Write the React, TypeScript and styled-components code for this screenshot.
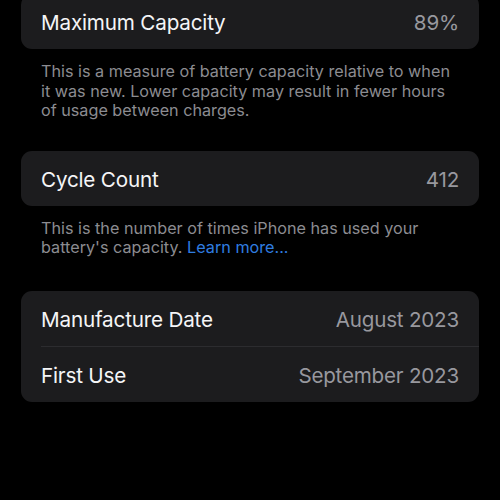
import React from 'react';
import styled, { createGlobalStyle } from 'styled-components';

const GlobalStyle = createGlobalStyle`
  html, body {
    margin: 0;
    padding: 0;
    background: #000;
  }
  body {
    font-family: Inter, "Noto Sans", "Liberation Sans", sans-serif;
    -webkit-font-smoothing: antialiased;
  }
`;

type RowType = {
  label: string;
  value: string;
};

const dates: RowType[] = [
  { label: 'Manufacture Date', value: 'August 2023' },
  { label: 'First Use', value: 'September 2023' },
];

const Battery = () => {
  return (
    <Main>
      <GlobalStyle />
      <Group $first>
        <Row>
          <Label>Maximum Capacity</Label>
          <Value>89%</Value>
        </Row>
      </Group>
      <Caption>
        This is a measure of battery capacity relative to when it was new. Lower capacity may
        result in fewer hours of usage between charges.
      </Caption>

      <Group>
        <Row>
          <Label>Cycle Count</Label>
          <Value>412</Value>
        </Row>
      </Group>
      <Caption $gap={33}>
        This is the number of times iPhone has used your battery's capacity.{' '}
        <Link>Learn more...</Link>
      </Caption>

      <Group>
        {dates.map((el, i) => (
          <Row key={i} $divider={i > 0} $tall>
            <Label>{el.label}</Label>
            <Value>{el.value}</Value>
          </Row>
        ))}
      </Group>
    </Main>
  );
};

const Main = styled.main`
  width: 500px;
  height: 500px;
  overflow: hidden;
  background: #000;
  display: flex;
  flex-direction: column;
  padding: 0 21px;
  box-sizing: border-box;
`;

const Group = styled.section<{ $first?: boolean }>`
  background: #1c1c1e;
  border-radius: 11px;
  overflow: hidden;
  margin-top: ${(p) => (p.$first ? '-6px' : '0')};
`;

const Row = styled.div<{ $divider?: boolean; $tall?: boolean }>`
  height: ${(p) => (p.$tall ? '55.5px' : '55px')};
  box-sizing: border-box;
  display: flex;
  align-items: center;
  justify-content: space-between;
  padding: 2px 20px 0 ${(p) => (p.$divider ? '0' : '20px')};
  margin-left: ${(p) => (p.$divider ? '20px' : '0')};
  border-top: ${(p) => (p.$divider ? '1px solid #2c2c2f' : 'none')};
`;

const Label = styled.span`
  color: #f5f5f7;
  font-size: 20.7px;
  letter-spacing: -0.2px;
`;

const Value = styled.span`
  color: #98989e;
  font-size: 20.6px;
  letter-spacing: -0.2px;
`;

const Caption = styled.p<{ $gap?: number }>`
  margin: 13px 0 ${(p) => p.$gap ?? 30}px;
  padding: 0 20px;
  color: #8c8c91;
  font-size: 16.2px;
  line-height: 19.5px;
`;

const Link = styled.span`
  color: #2f7de1;
`;

export default Battery;
